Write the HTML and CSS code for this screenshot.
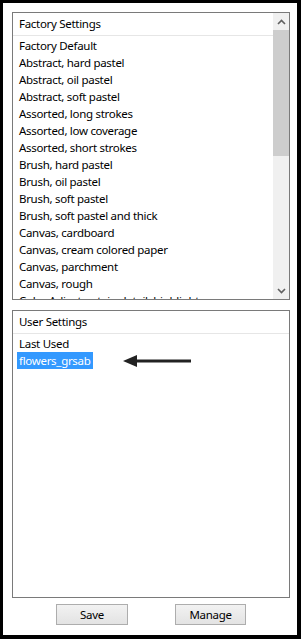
FILE: index.html
```html
<!DOCTYPE html>
<html>
<head>
<meta charset="utf-8">
<link rel="stylesheet" href="styles.css">
</head>
<body>
<div class="frame">
  <div class="listbox">
    <div class="list-main">
      <div class="list-header">Factory Settings</div>
      <div class="items">
        <div class="item">Factory Default</div>
        <div class="item">Abstract, hard pastel</div>
        <div class="item">Abstract, oil pastel</div>
        <div class="item">Abstract, soft pastel</div>
        <div class="item">Assorted, long strokes</div>
        <div class="item">Assorted, low coverage</div>
        <div class="item">Assorted, short strokes</div>
        <div class="item">Brush, hard pastel</div>
        <div class="item">Brush, oil pastel</div>
        <div class="item">Brush, soft pastel</div>
        <div class="item">Brush, soft pastel and thick</div>
        <div class="item">Canvas, cardboard</div>
        <div class="item">Canvas, cream colored paper</div>
        <div class="item">Canvas, parchment</div>
        <div class="item">Canvas, rough</div>
        <div class="item">Color Adjust, retain detail, highlight</div>
      </div>
    </div>
    <div class="scrollbar">
      <div class="sb-btn">
        <svg width="9" height="6" viewBox="0 0 9 6"><path d="M1 5 L4.5 1.5 L8 5" fill="none" stroke="#606060" stroke-width="1.6"/></svg>
      </div>
      <div class="sb-thumb"></div>
      <div class="sb-track"></div>
      <div class="sb-btn">
        <svg width="9" height="6" viewBox="0 0 9 6"><path d="M1 1 L4.5 4.5 L8 1" fill="none" stroke="#606060" stroke-width="1.6"/></svg>
      </div>
    </div>
  </div>

  <div class="listbox user">
    <div class="list-main">
      <div class="list-header">User Settings</div>
      <div class="items">
        <div class="item">Last Used</div>
        <div class="item"><span class="selected">flowers_grsab</span></div>
      </div>
    </div>
    <svg class="pointer" width="70" height="14" viewBox="0 0 70 14">
      <polygon points="0,7 14,1 14,13" fill="#222"/>
      <rect x="12" y="5.5" width="56" height="3" fill="#222"/>
    </svg>
  </div>

  <div class="buttons">
    <button class="btn save">Save</button>
    <button class="btn manage">Manage</button>
  </div>
</div>
</body>
</html>
```

FILE: styles.css
```css
html, body {
  margin: 0;
  padding: 0;
  background: #000;
}

body {
  width: 301px;
  height: 639px;
  overflow: hidden;
  font-family: "Noto Sans", "DejaVu Sans", sans-serif;
  font-size: 11.5px;
  letter-spacing: -0.3px;
  color: #000;
}

.frame {
  margin: 3px 4px 4px 3px;
  width: 294px;
  height: 632px;
  box-sizing: border-box;
  background: #fff;
  padding: 9px 7px 0 9px;
}

.listbox {
  position: relative;
  display: flex;
  width: 278px;
  height: 288px;
  box-sizing: border-box;
  border: 1px solid #7a7a7a;
  background: #fff;
  overflow: hidden;
}

.listbox.user {
  margin-top: 10px;
}

.list-main {
  flex: 1;
  min-width: 0;
  display: flex;
  flex-direction: column;
}

.list-header {
  height: 22px;
  line-height: 22px;
  padding-left: 6px;
  border-bottom: 1px solid #e6e6e6;
  background: #fff;
  white-space: nowrap;
}

.items {
  padding-top: 1px;
  overflow: hidden;
  flex: 1;
}

.item {
  height: 17px;
  line-height: 17px;
  padding-left: 6px;
  white-space: nowrap;
}

.selected {
  display: inline-block;
  margin-left: -2px;
  padding: 0 2px;
  background: #3399ff;
  color: #fff;
}

.scrollbar {
  width: 16px;
  display: flex;
  flex-direction: column;
  background: #f0f0f0;
}

.sb-btn {
  height: 17px;
  display: flex;
  align-items: center;
  justify-content: center;
  background: #f0f0f0;
}

.sb-thumb {
  height: 126px;
  background: #cdcdcd;
}

.sb-track {
  flex: 1;
  background: #f0f0f0;
}

.pointer {
  position: absolute;
  left: 110px;
  top: 43px;
}

.buttons {
  display: flex;
  justify-content: center;
  gap: 47px;
  margin-top: 6px;
  width: 278px;
}

.btn {
  height: 21px;
  padding: 0;
  margin: 0;
  border: 1px solid #adadad;
  background: linear-gradient(#f2f2f2, #e3e3e3);
  font-family: "Noto Sans", "DejaVu Sans", sans-serif;
  font-size: 11.5px;
  letter-spacing: -0.3px;
  color: #000;
  line-height: 18px;
}

.btn.save {
  width: 72px;
}

.btn.manage {
  width: 71px;
}
```
